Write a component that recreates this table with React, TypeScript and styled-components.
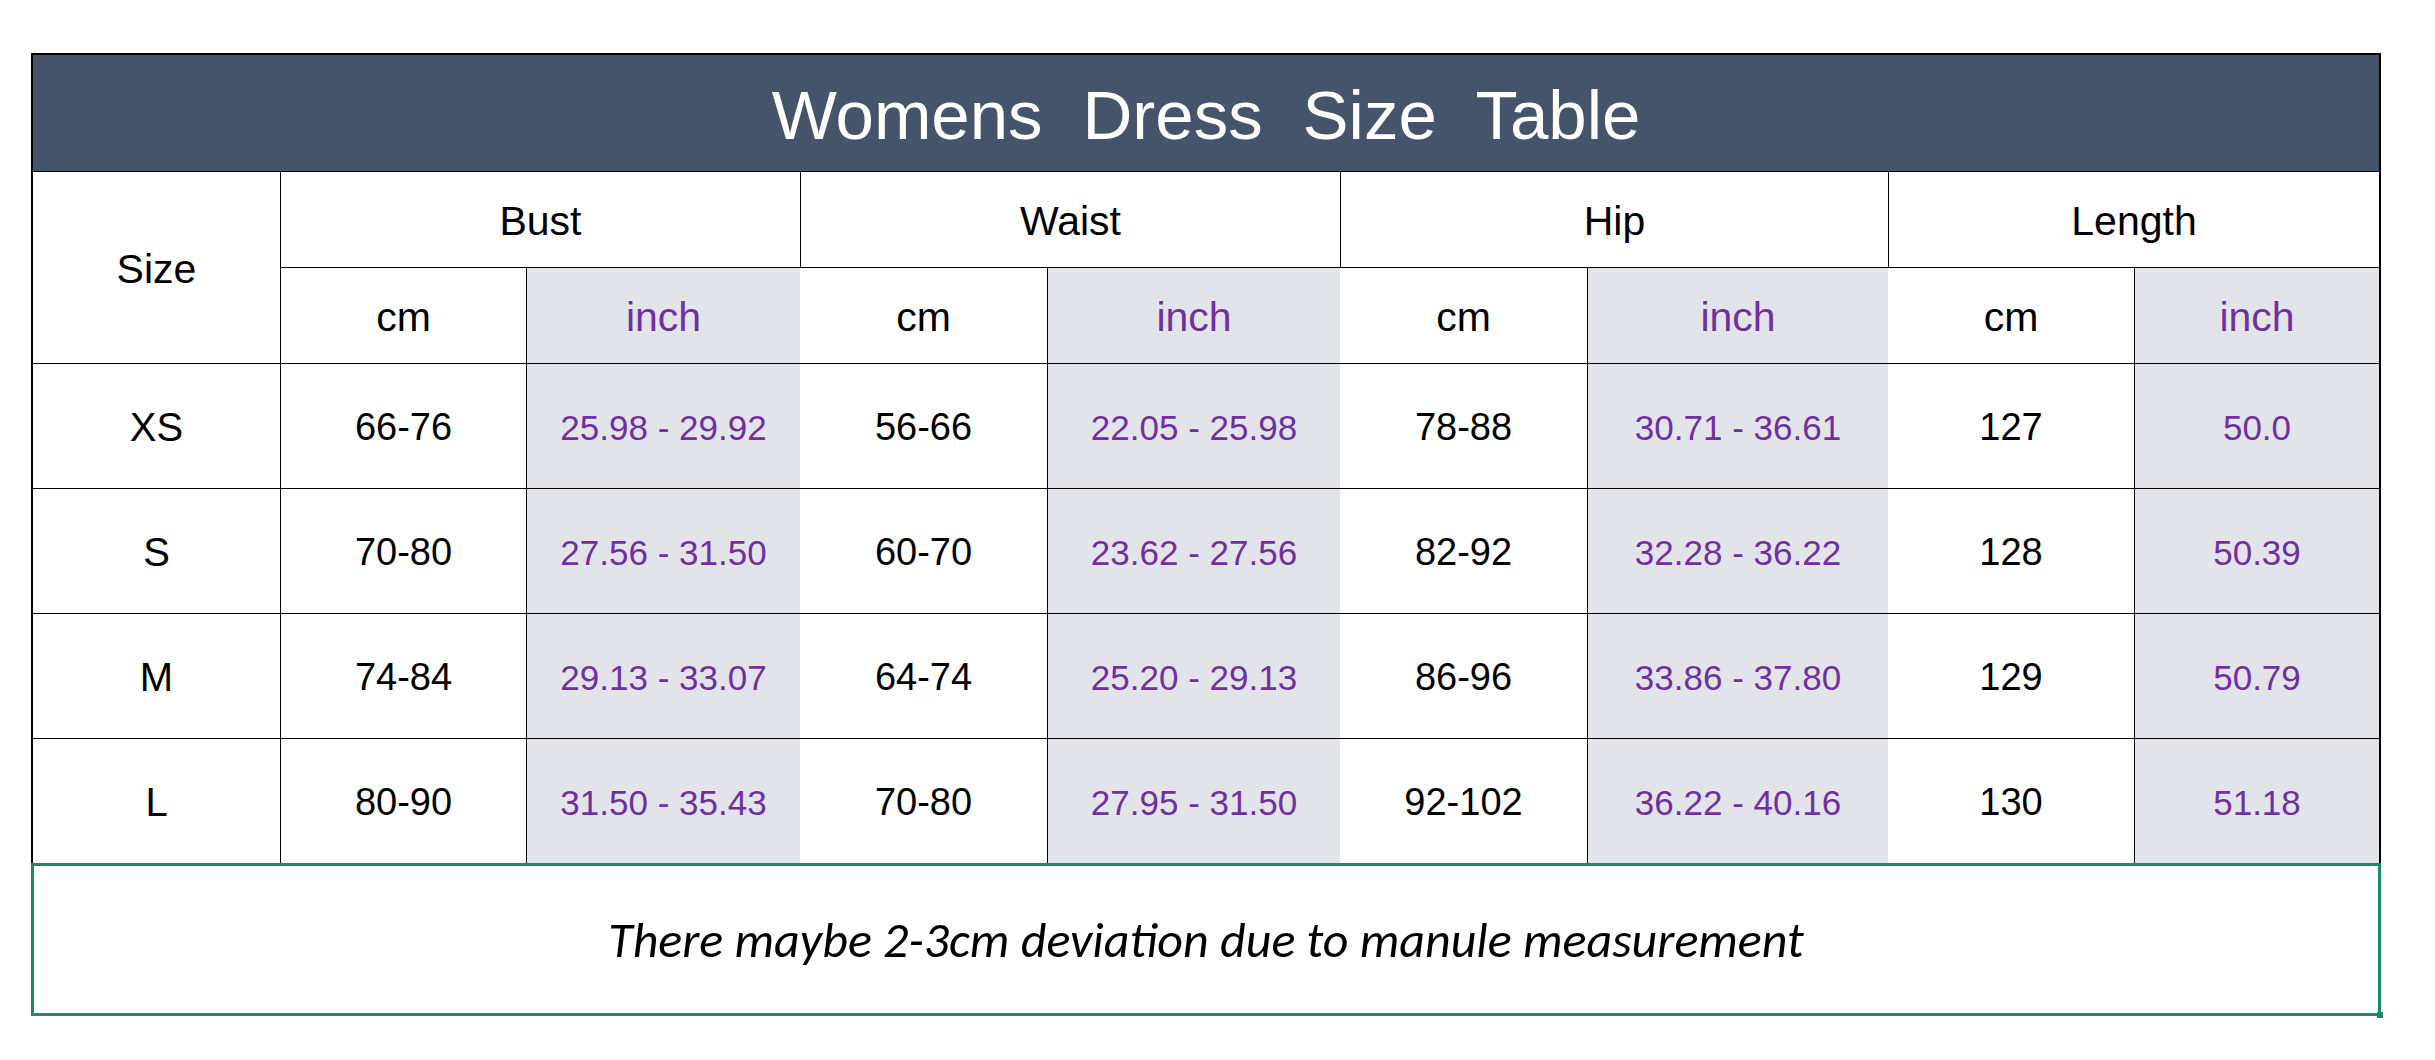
import React from "react";
import styled, { createGlobalStyle } from "styled-components";

const GlobalStyle = createGlobalStyle`
  html, body { margin: 0; padding: 0; background: #ffffff; }
  * { box-sizing: border-box; }
`;

const Page = styled.div`
  width: 2435px;
  height: 1060px;
  padding: 53px 0 0 31px;
  background: #ffffff;
`;

const Sheet = styled.div`
  width: 2350px;
  display: flex;
  flex-direction: column;
`;

const Title = styled.div`
  height: 118px;
  background: #44546a;
  border: 2px solid #000;
  border-bottom: none;
  display: flex;
  align-items: center;
  justify-content: center;
  color: #ffffff;
  font-family: "Liberation Sans", Arial, sans-serif;
  font-size: 69px;
  word-spacing: 0.3em;
  padding-top: 4px;
`;

const Grid = styled.div`
  display: grid;
  grid-template-columns: 247px 246px 274px 247px 293px 247px 301px 246px 245px;
  grid-template-rows: 96px 96px repeat(4, 125px);
  border-left: 2px solid #000;
  border-right: 2px solid #000;
  font-family: "Liberation Sans", Arial, sans-serif;
`;

const Cell = styled.div<{ $line?: boolean; $shade?: boolean; $span?: number; $rows?: number; $kind?: "head" | "size" | "cm" | "inch" }>`
  display: flex;
  align-items: center;
  justify-content: center;
  padding-top: 3px;
  border-top: 1px solid #000;
  border-left: ${(p) => (p.$line ? "1px solid #000" : "none")};
  background: ${(p) => (p.$shade ? "#e3e4e9" : "#ffffff")};
  grid-column: ${(p) => (p.$span ? `span ${p.$span}` : "auto")};
  grid-row: ${(p) => (p.$rows ? `span ${p.$rows}` : "auto")};
  color: ${(p) => (p.$kind === "inch" ? "#7030a0" : "#000000")};
  font-size: ${(p) =>
    p.$kind === "inch" ? "35px" : p.$kind === "cm" ? "38px" : p.$kind === "size" ? "40px" : "41px"};
  white-space: nowrap;
`;

const UnitLabel = styled.span<{ $inch?: boolean }>`
  color: ${(p) => (p.$inch ? "#7030a0" : "#000000")};
  font-size: 41px;
`;

const Note = styled.div`
  position: relative;
  height: 153px;
  border: 3px solid #1f8a6b;
  display: flex;
  align-items: center;
  justify-content: center;
  font-family: Carlito, Lato, "Open Sans", sans-serif;
  font-style: italic;
  font-size: 50px;
  color: #000;
  &::after {
    content: "";
    position: absolute;
    right: -5px;
    bottom: -5px;
    width: 6px;
    height: 6px;
    background: #1f8a6b;
  }
`;

const groups = ["Bust", "Waist", "Hip", "Length"];

const rows: [string, string[]][] = [
  ["XS", ["66-76", "25.98 - 29.92", "56-66", "22.05 - 25.98", "78-88", "30.71 - 36.61", "127", "50.0"]],
  ["S", ["70-80", "27.56 - 31.50", "60-70", "23.62 - 27.56", "82-92", "32.28 - 36.22", "128", "50.39"]],
  ["M", ["74-84", "29.13 - 33.07", "64-74", "25.20 - 29.13", "86-96", "33.86 - 37.80", "129", "50.79"]],
  ["L", ["80-90", "31.50 - 35.43", "70-80", "27.95 - 31.50", "92-102", "36.22 - 40.16", "130", "51.18"]],
];

export default function App() {
  return (
    <>
      <GlobalStyle />
      <Page>
        <Sheet>
          <Title>Womens Dress Size Table</Title>
          <Grid>
            <Cell $rows={2} $kind="head">Size</Cell>
            {groups.map((g) => (
              <Cell key={g} $span={2} $line $kind="head">
                {g}
              </Cell>
            ))}
            {groups.map((g, i) => (
              <React.Fragment key={g + "u"}>
                <Cell $line={i === 0} $kind="head">
                  <UnitLabel>cm</UnitLabel>
                </Cell>
                <Cell $line $shade $kind="head">
                  <UnitLabel $inch>inch</UnitLabel>
                </Cell>
              </React.Fragment>
            ))}
            {rows.map(([size, vals]) => (
              <React.Fragment key={size}>
                <Cell $kind="size">{size}</Cell>
                {vals.map((v, i) => {
                  const inch = i % 2 === 1;
                  return (
                    <Cell key={i} $line={inch || i === 0} $shade={inch} $kind={inch ? "inch" : "cm"}>
                      {v}
                    </Cell>
                  );
                })}
              </React.Fragment>
            ))}
          </Grid>
          <Note>There maybe 2-3cm deviation due to manule measurement</Note>
        </Sheet>
      </Page>
    </>
  );
}
